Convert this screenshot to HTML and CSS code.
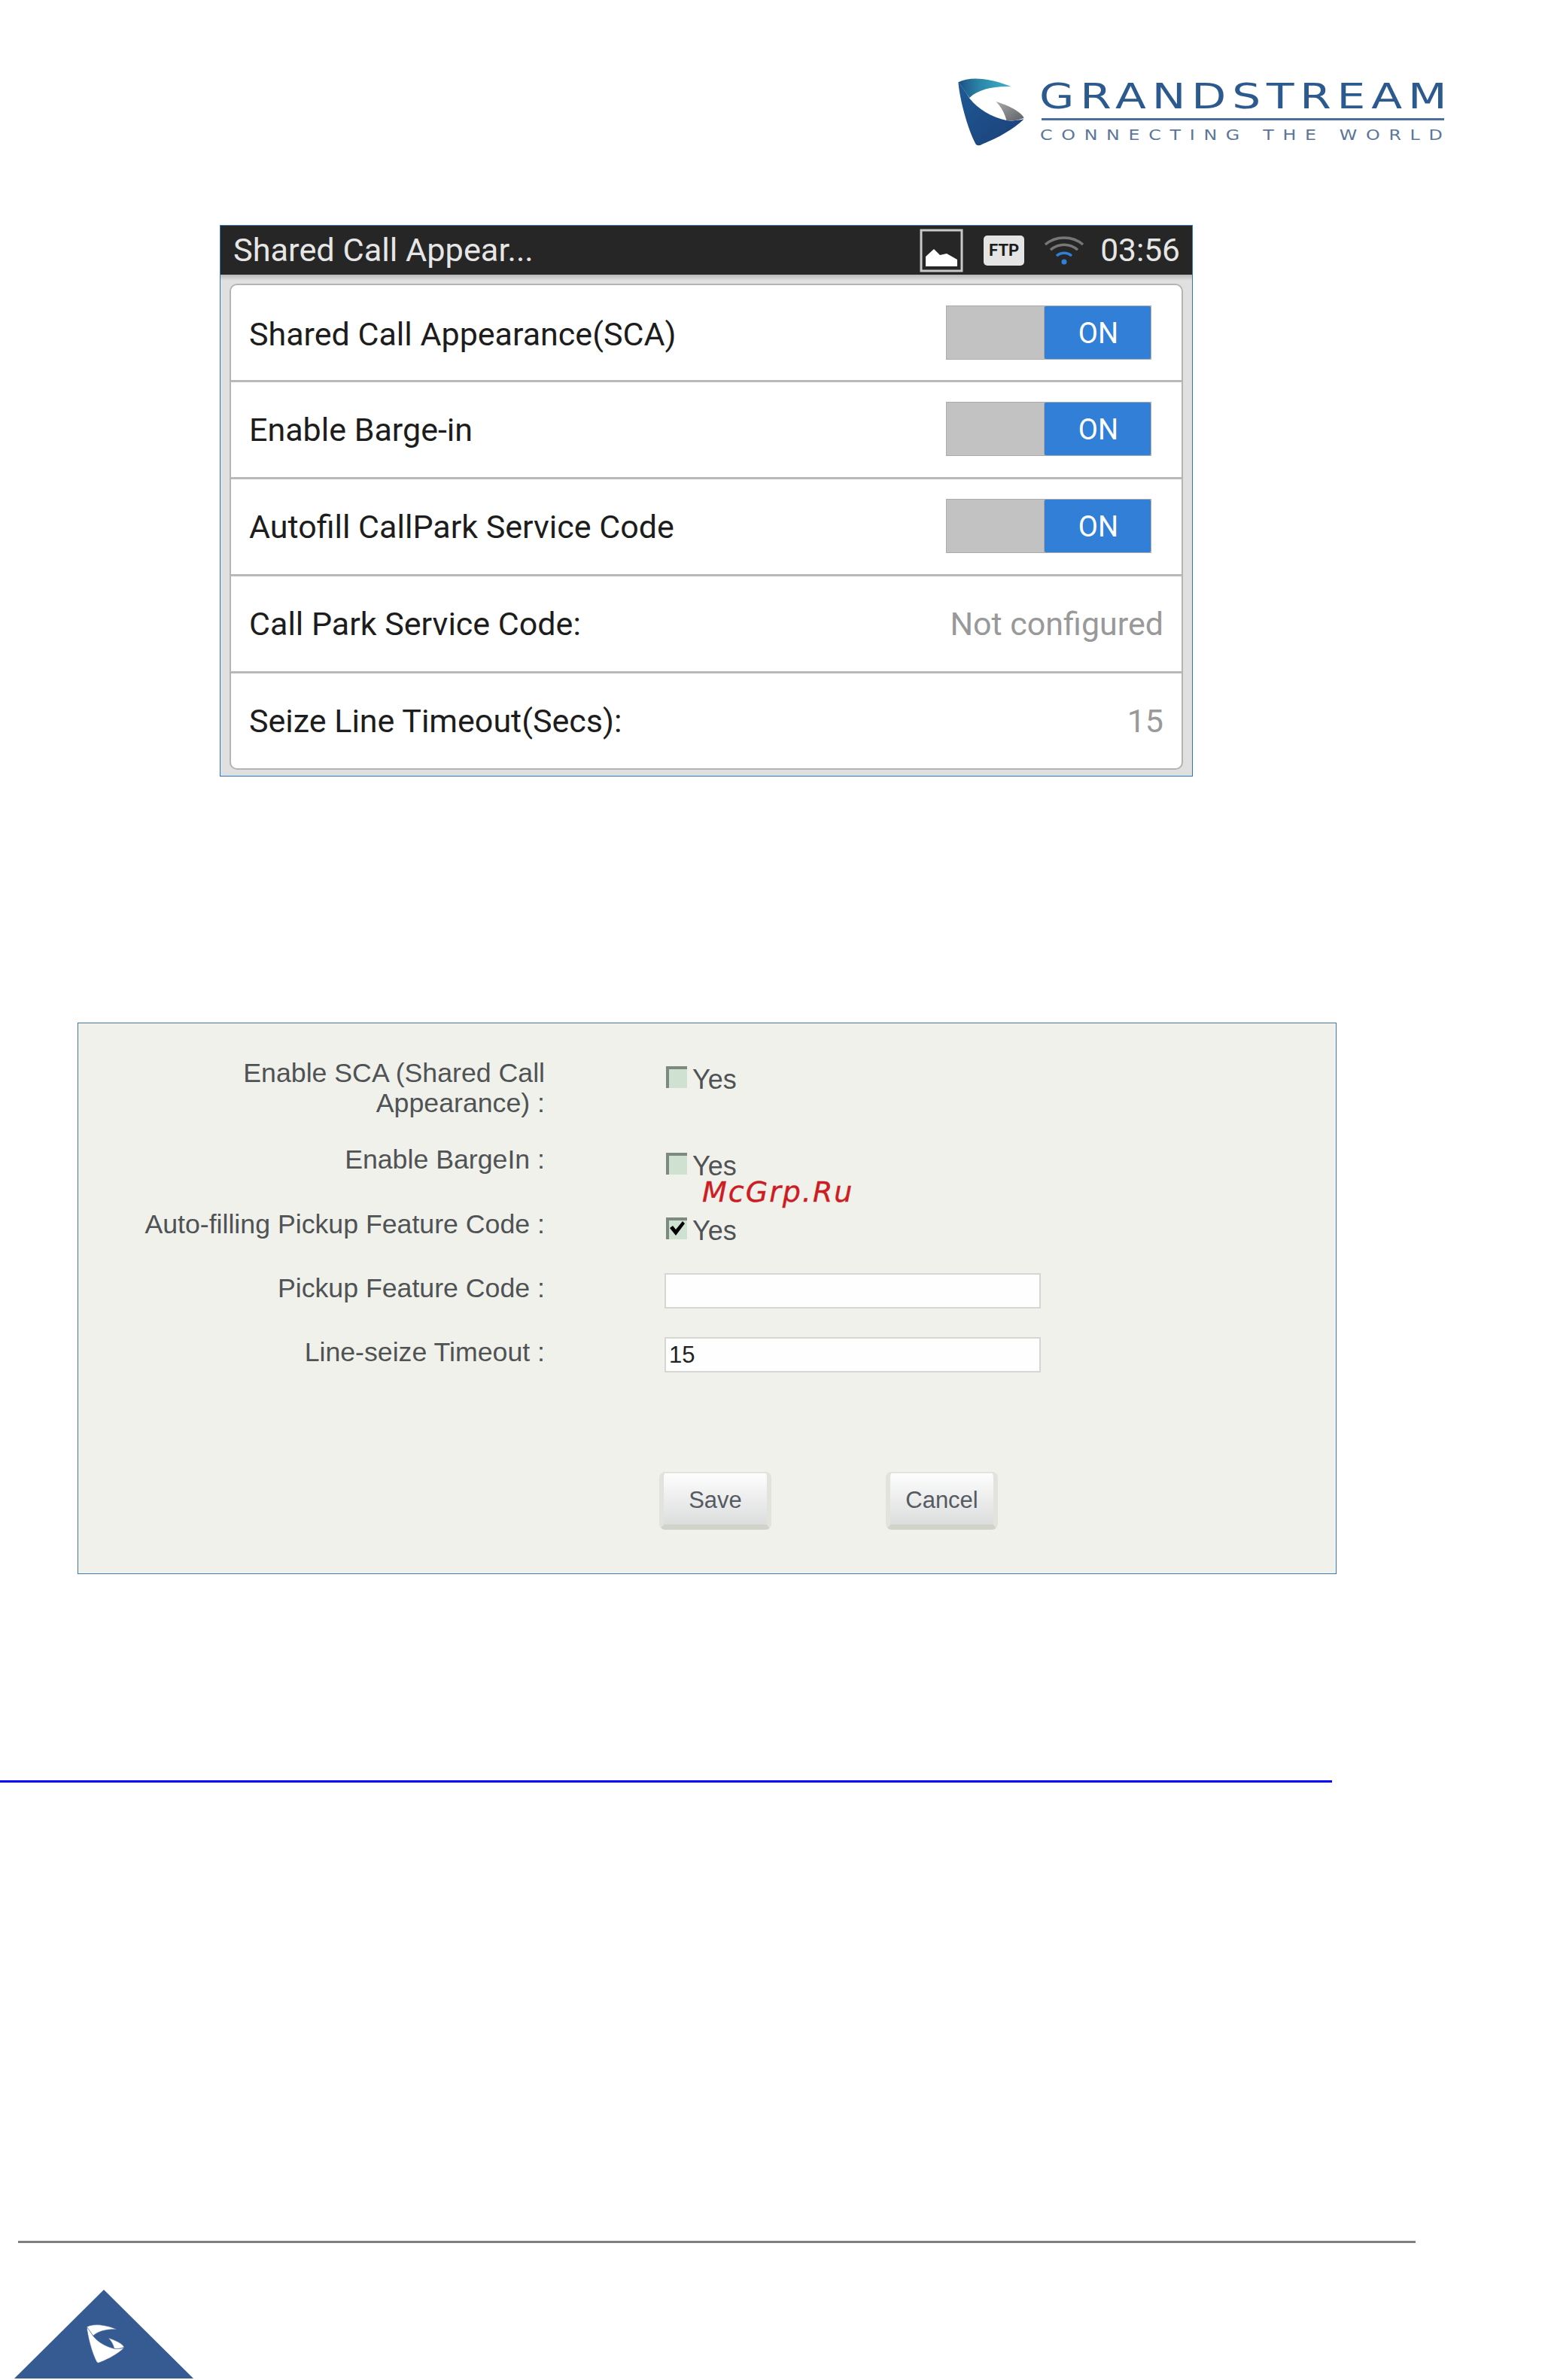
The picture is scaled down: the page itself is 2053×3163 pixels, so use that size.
FILE: index.html
```html
<!DOCTYPE html>
<html lang="en">
<head>
<meta charset="utf-8">
<title>Shared Call Appearance</title>
<link rel="stylesheet" href="styles.css">
</head>
<body>
<header class="page-head">
  <div class="brand">
    <svg class="brand-mark" viewBox="0 0 390 360" aria-hidden="true">
      <defs>
        <linearGradient id="gTeal" x1="0" y1="0" x2="1" y2="0">
          <stop offset="0" stop-color="#1d4f86"/>
          <stop offset=".4" stop-color="#2a86a8"/>
          <stop offset="1" stop-color="#3fb3cc"/>
        </linearGradient>
        <linearGradient id="gBlue" x1="0" y1="0" x2="1" y2="1">
          <stop offset="0" stop-color="#1e5a94"/>
          <stop offset="1" stop-color="#1c3f78"/>
        </linearGradient>
        <linearGradient id="gGrey" x1="0" y1="0" x2="1" y2="1">
          <stop offset="0" stop-color="#a9a9a9"/>
          <stop offset="1" stop-color="#5d6066"/>
        </linearGradient>
      </defs>
      <path fill="url(#gBlue)" d="M70 58C75 120 105 240 140 305Q150 315 165 305C230 280 290 245 332 205C300 212 280 212 262 210C200 195 150 165 115 122C105 105 85 75 70 58Z"/>
      <path fill="url(#gTeal)" d="M70 58C120 30 210 45 282 76C220 72 150 85 115 120C100 100 85 75 70 58Z"/>
      <path fill="url(#gGrey)" d="M220 135C270 150 320 175 332 200C300 212 280 212 262 210C255 180 240 155 220 135Z"/>
    </svg>
    <div class="brand-text">
      <div class="brand-name">GRANDSTREAM</div>
      <div class="brand-rule"></div>
      <div class="brand-tag">CONNECTING THE WORLD</div>
    </div>
  </div>
</header>

<section class="phone">
  <div class="status">
    <span class="status-title">Shared Call Appear...</span>
    <svg class="ico-pic" viewBox="0 0 58 58" aria-hidden="true">
      <rect x="2" y="2" width="54" height="54" fill="none" stroke="#c8c8c8" stroke-width="3"/>
      <path fill="#fff" d="M8 50V37L19 27L27 35L36 33L50 41V50Z"/>
    </svg>
    <span class="ico-ftp">FTP</span>
    <svg class="ico-wifi" viewBox="0 0 54 38" aria-hidden="true">
      <path fill="none" stroke="#777" stroke-width="3.5" d="M2 11C16 -1 38 -1 52 11"/>
      <path fill="none" stroke="#777" stroke-width="3.5" d="M9 18C20 9 34 9 45 18"/>
      <path fill="none" stroke="#2f80d8" stroke-width="3.5" d="M17 26C23 21 31 21 37 26"/>
      <circle cx="27" cy="34" r="3.5" fill="#2f80d8"/>
    </svg>
    <span class="status-time">03:56</span>
  </div>
  <div class="phone-body">
    <div class="card">
      <div class="row"><span class="row-label">Shared Call Appearance(SCA)</span><span class="toggle"><span class="toggle-on">ON</span></span></div>
      <div class="row"><span class="row-label">Enable Barge-in</span><span class="toggle"><span class="toggle-on">ON</span></span></div>
      <div class="row"><span class="row-label">Autofill CallPark Service Code</span><span class="toggle"><span class="toggle-on">ON</span></span></div>
      <div class="row"><span class="row-label">Call Park Service Code:</span><span class="row-value">Not configured</span></div>
      <div class="row"><span class="row-label">Seize Line Timeout(Secs):</span><span class="row-value">15</span></div>
    </div>
  </div>
</section>

<section class="form">
  <div class="f-row f-row-1">
    <div class="f-label">Enable SCA (Shared Call<br>Appearance) :</div>
    <div class="f-check"><span class="cb"></span><span class="yes">Yes</span></div>
  </div>
  <div class="f-row f-row-2">
    <div class="f-label">Enable BargeIn :</div>
    <div class="f-check"><span class="cb"></span><span class="yes">Yes</span></div>
  </div>
  <div class="f-row f-row-3">
    <div class="f-label">Auto-filling Pickup Feature Code :</div>
    <div class="f-check"><span class="cb cb-on"><svg viewBox="0 0 22 22" aria-hidden="true"><path fill="#000" d="M1 10L5 7L9 12L18 1L21 4L9 20Z"/></svg></span><span class="yes">Yes</span></div>
  </div>
  <div class="f-row f-row-4">
    <div class="f-label">Pickup Feature Code :</div>
    <div class="f-input"></div>
  </div>
  <div class="f-row f-row-5">
    <div class="f-label">Line-seize Timeout :</div>
    <div class="f-input">15</div>
  </div>
  <div class="f-actions">
    <span class="btn">Save</span>
    <span class="btn">Cancel</span>
  </div>
  <span class="watermark">McGrp.Ru</span>
</section>

<div class="link-rule"></div>
<div class="foot-rule"></div>
<svg class="foot-mark" viewBox="0 0 240 120" aria-hidden="true">
  <polygon fill="#365b92" points="119,0 238,118 0,118"/>
  <g transform="translate(83 38.4) scale(.19)">
    <path fill="#fff" stroke="#365b92" stroke-width="3" d="M70 58C75 120 105 240 140 305Q150 315 165 305C230 280 290 245 332 205C300 212 280 212 262 210C200 195 150 165 115 122C105 105 85 75 70 58Z"/>
    <path fill="#fff" stroke="#365b92" stroke-width="3" d="M70 58C120 30 210 45 282 76C220 72 150 85 115 120C100 100 85 75 70 58Z"/>
    <path fill="#fff" stroke="#365b92" stroke-width="3" d="M220 135C270 150 320 175 332 200C300 212 280 212 262 210C255 180 240 155 220 135Z"/>
  </g>
</svg>
</body>
</html>
```

FILE: styles.css
```css
* { box-sizing: border-box; }
html, body { margin: 0; padding: 0; background: #fff; }
body { width: 2053px; height: 3163px; overflow: hidden; font-family: "Liberation Sans", Arial, sans-serif; }

/* Header logo */
.page-head { height: 299px; padding: 90px 134px 0 0; display: flex; justify-content: flex-end; align-items: flex-start; }
.brand { display: flex; gap: 4px; align-items: flex-start; }
.brand-mark { width: 130px; height: 120px; display: block; }
.brand-text { width: 535px; padding-top: 18px; font-family: "DejaVu Sans", sans-serif; }
.brand-name { font-size: 46px; line-height: 40px; letter-spacing: 6px; margin-left: -3px; color: #2c5a8f; white-space: nowrap; transform: scaleX(1.3); transform-origin: left center; }
.brand-rule { height: 3px; background: #4a6f9f; margin-top: 9px; }
.brand-tag { font-size: 19px; line-height: 20px; letter-spacing: 9.35px; margin-top: 9px; margin-left: -2px; color: #5b7699; white-space: nowrap; transform: scaleX(1.25); transform-origin: left center; }

/* Phone screenshot */
.phone { margin-left: 292px; width: 1293px; height: 733px; border: 1px solid #2f75b5; display: flex; flex-direction: column; background: #e0e0e0; font-family: Roboto, sans-serif; }
.status { height: 65px; background: #262626; color: #e6e6e6; display: flex; align-items: center; padding: 0 16px 0 17px; font-size: 43.3px; flex: none; }
.status-title { margin-right: auto; }
.status-time { font-size: 42.5px; }
.ico-pic { width: 58px; height: 58px; display: block; margin-right: 27px; }
.ico-ftp { width: 54px; height: 40px; background: #e4e4e4; border-radius: 5px; color: #1c1c1c; font-size: 22px; font-weight: 700; display: flex; align-items: center; justify-content: center; margin-right: 26px; }
.ico-wifi { width: 54px; height: 38px; display: block; margin-right: 21px; }
.phone-body { flex: 1; padding: 12px 12px 8px 12px; background: linear-gradient(#b8b8b8, #e0e0e0 8px); }
.card { background: #fff; border: 2px solid #b4b4b4; border-radius: 10px; height: 646px; display: flex; flex-direction: column; overflow: hidden; }
.row { flex: 1; display: flex; align-items: center; justify-content: space-between; padding: 0 24px 0 24px; border-top: 3px solid #b9b9b9; font-size: 43px; color: #1d1d1d; }
.row:first-child { border-top: 0; }
.row:first-child .row-label { margin-top: 3px; }
.row + .row .toggle { margin-bottom: 3px; }
.row-value { color: #999; }
.toggle { width: 273px; height: 72px; background: #c2c2c2; border: 1px solid #ababab; display: flex; justify-content: flex-end; margin-right: 16px; }
.toggle-on { width: 141px; background: #317fd6; color: #fff; font-size: 38px; padding: 2px 0 0 2px; display: flex; align-items: center; justify-content: center; border-radius: 2px; box-shadow: -1px 0 0 #a8a8a8; }

/* Web form */
.form { position: relative; margin: 327px 0 0 103px; width: 1673px; height: 733px; border: 1px solid #3f78ab; background: #f0f1eb; padding-top: 46px; }
.f-row { display: flex; align-items: flex-start; }
.f-row-1 { height: 115px; }
.f-row-2 { height: 86px; }
.f-row-3 { height: 85px; }
.f-row-4 { height: 85px; }
.f-row-5 { height: 92px; }
.f-label { width: 620px; flex: none; text-align: right; font-size: 35.7px; line-height: 40px; color: #505355; }
.f-check { margin-left: 161px; padding-top: 11px; display: flex; align-items: flex-start; }
.cb { width: 28px; height: 29px; flex: none; display: block; background: #cfe2d2; border-top: 4px solid #7c8a80; border-left: 4px solid #7c8a80; }
.cb-on svg { width: 22px; height: 22px; display: block; }
.yes { margin-left: 7px; font-size: 36px; line-height: 36px; color: #505355; }
.f-input { margin-left: 159px; width: 500px; height: 47px; background: #fefefe; border: 2px solid #d6d7d3; font-size: 31px; line-height: 43px; padding-left: 4px; color: #222; }
.f-actions { margin: 87px 0 0 772px; display: flex; gap: 152px; }
.btn { width: 149px; height: 77px; padding-top: 3px; border: solid #e2e3dc; border-width: 2px 6px 7px; border-bottom-color: #d1d3cb; border-radius: 8px; background: linear-gradient(#fdfdfd, #dcdddd); display: flex; align-items: center; justify-content: center; font-size: 31px; color: #555b62; }
.watermark { position: absolute; left: 829px; top: 202px; font-family: "DejaVu Sans", sans-serif; font-style: italic; font-size: 38px; line-height: 44px; letter-spacing: 2px; color: #cc1d24; -webkit-text-stroke: .4px #cc1d24; white-space: nowrap; }

/* Footer */
.link-rule { width: 1770px; height: 3px; background: #00f; margin-top: 274px; }
.foot-rule { width: 1857px; height: 3px; background: #7f7f7f; margin: 609px 0 0 24px; }
.foot-mark { display: block; width: 240px; height: 120px; margin: 62px 0 0 19px; }
```
